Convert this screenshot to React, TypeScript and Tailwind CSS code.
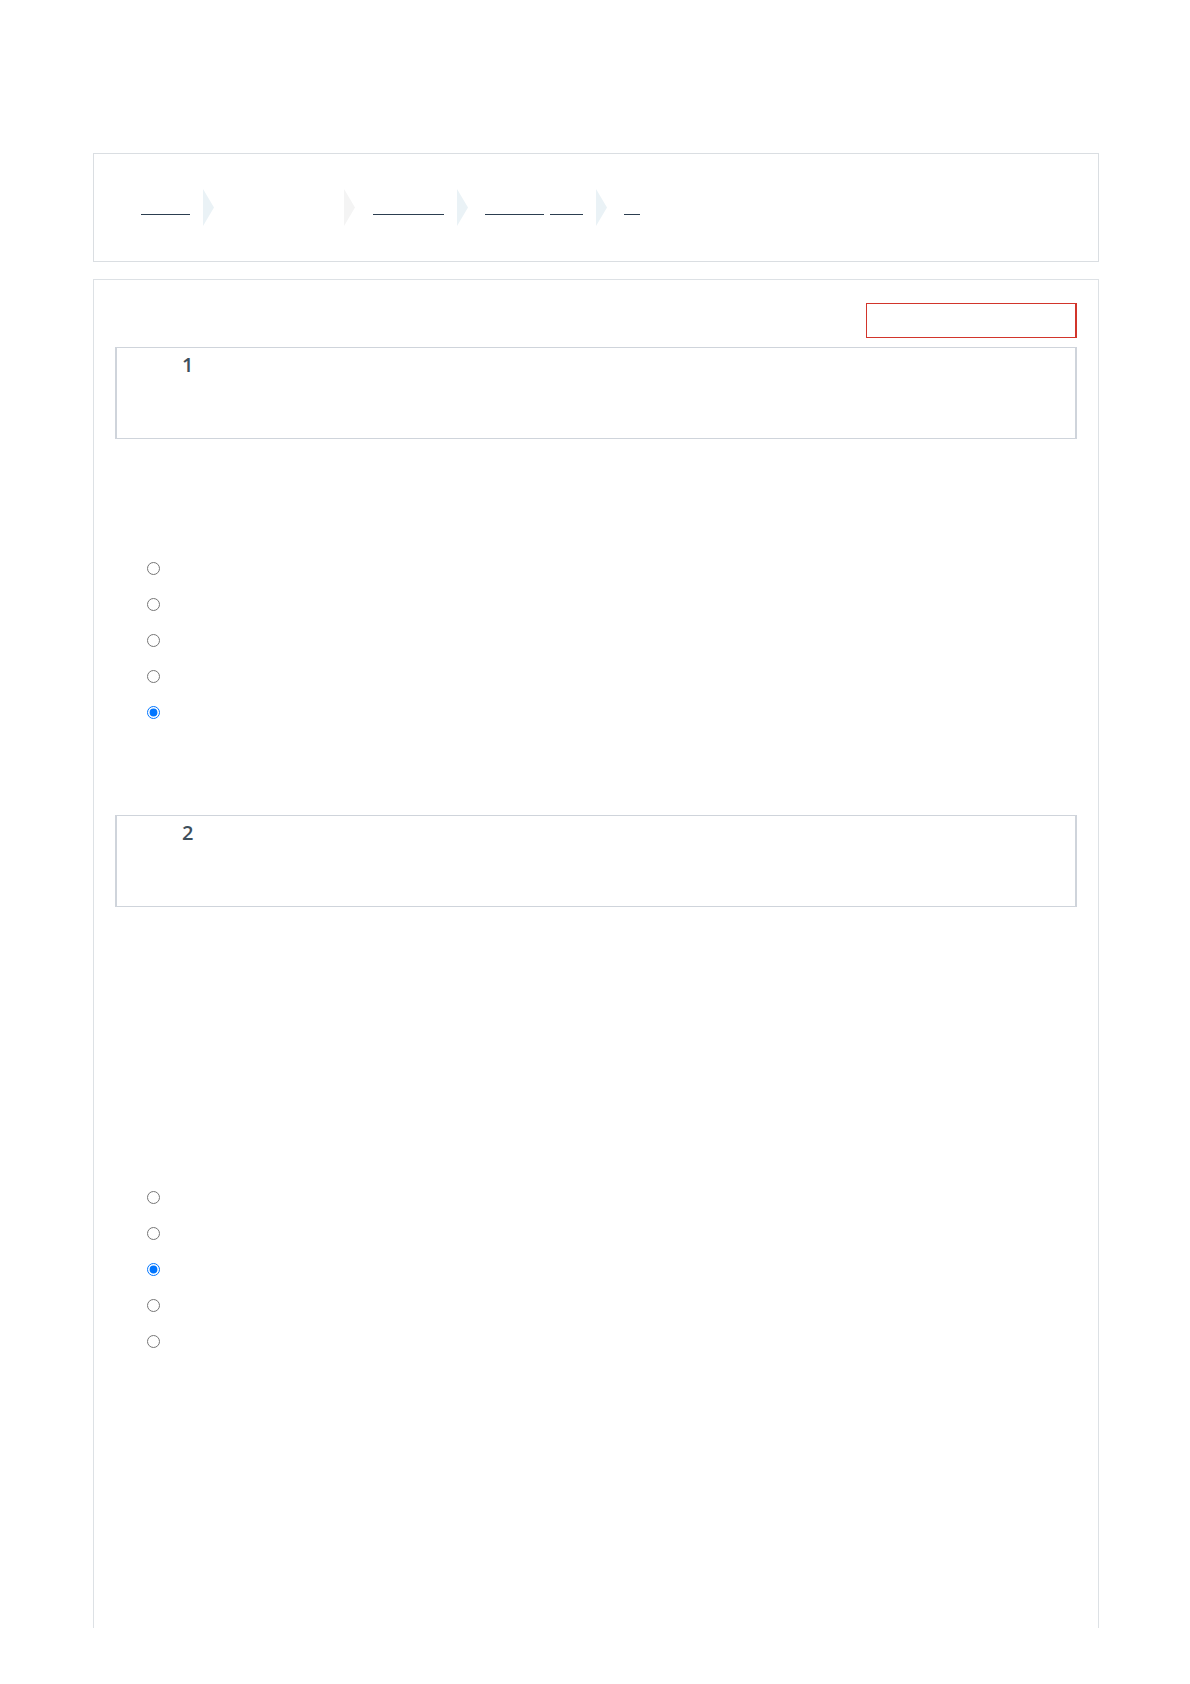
import React from 'react';

function Chevron({ tone = 'blue' }: { tone?: 'blue' | 'gray' }) {
  return (
    <svg width="11" height="37" viewBox="0 0 11 37" className="shrink-0 block">
      <polygon points="0,0 11,18.5 0,37" fill={tone === 'blue' ? '#eaf2f6' : '#f4f4f4'} />
    </svg>
  );
}

function Crumb({ w }: { w: number }) {
  return <span className="block shrink-0 h-[15px] border-b border-[#2c3e50]" style={{ width: w }} />;
}

function QuestionBox({ num }: { num: string }) {
  return (
    <div className="h-[92px] border border-[#cfd4db] border-l-2 border-r-2 pl-[65px] pt-[3px]">
      <span className="text-[20px] leading-7 font-semibold text-[#3e4f5b] font-['Open_Sans',sans-serif]">{num}</span>
    </div>
  );
}

function Options({ name, checked }: { name: string; checked: number }) {
  return (
    <div className="flex flex-col">
      {[0, 1, 2, 3, 4].map((i) => (
        <label key={i} className="h-[36px] flex items-center pl-[32px]">
          <input
            type="radio"
            name={name}
            defaultChecked={i === checked}
            className="m-0 w-[13px] h-[13px]"
          />
        </label>
      ))}
    </div>
  );
}

export default function App() {
  return (
    <div className="min-h-[1684px] bg-white pt-[153px]">
      <div className="w-[1006px] ml-[93px]">
        {/* breadcrumb */}
        <div className="h-[109px] border border-[#dadee2] flex items-center pl-[47px]">
          <Crumb w={49} />
          <div className="ml-[13px]"><Chevron /></div>
          <div className="ml-[130px]"><Chevron tone="gray" /></div>
          <div className="ml-[18px]"><Crumb w={71} /></div>
          <div className="ml-[13px]"><Chevron /></div>
          <div className="ml-[17px]"><Crumb w={59} /></div>
          <div className="ml-[6px]"><Crumb w={33} /></div>
          <div className="ml-[13px]"><Chevron /></div>
          <div className="ml-[17px]"><Crumb w={16} /></div>
        </div>

        {/* questions */}
        <div className="mt-[17px] h-[1349px] border-t border-x border-[#dde1e5] px-[21px] pt-[23px]">
          <div className="flex justify-end">
            <div className="w-[211px] h-[35px] border border-r-2 border-[#d2352b]" />
          </div>

          <div className="mt-[9px]">
            <QuestionBox num="1" />
          </div>
          <div className="mt-[111px]">
            <Options name="q1" checked={4} />
          </div>

          <div className="mt-[85px]">
            <QuestionBox num="2" />
          </div>
          <div className="mt-[272px]">
            <Options name="q2" checked={2} />
          </div>
        </div>
      </div>
    </div>
  );
}
